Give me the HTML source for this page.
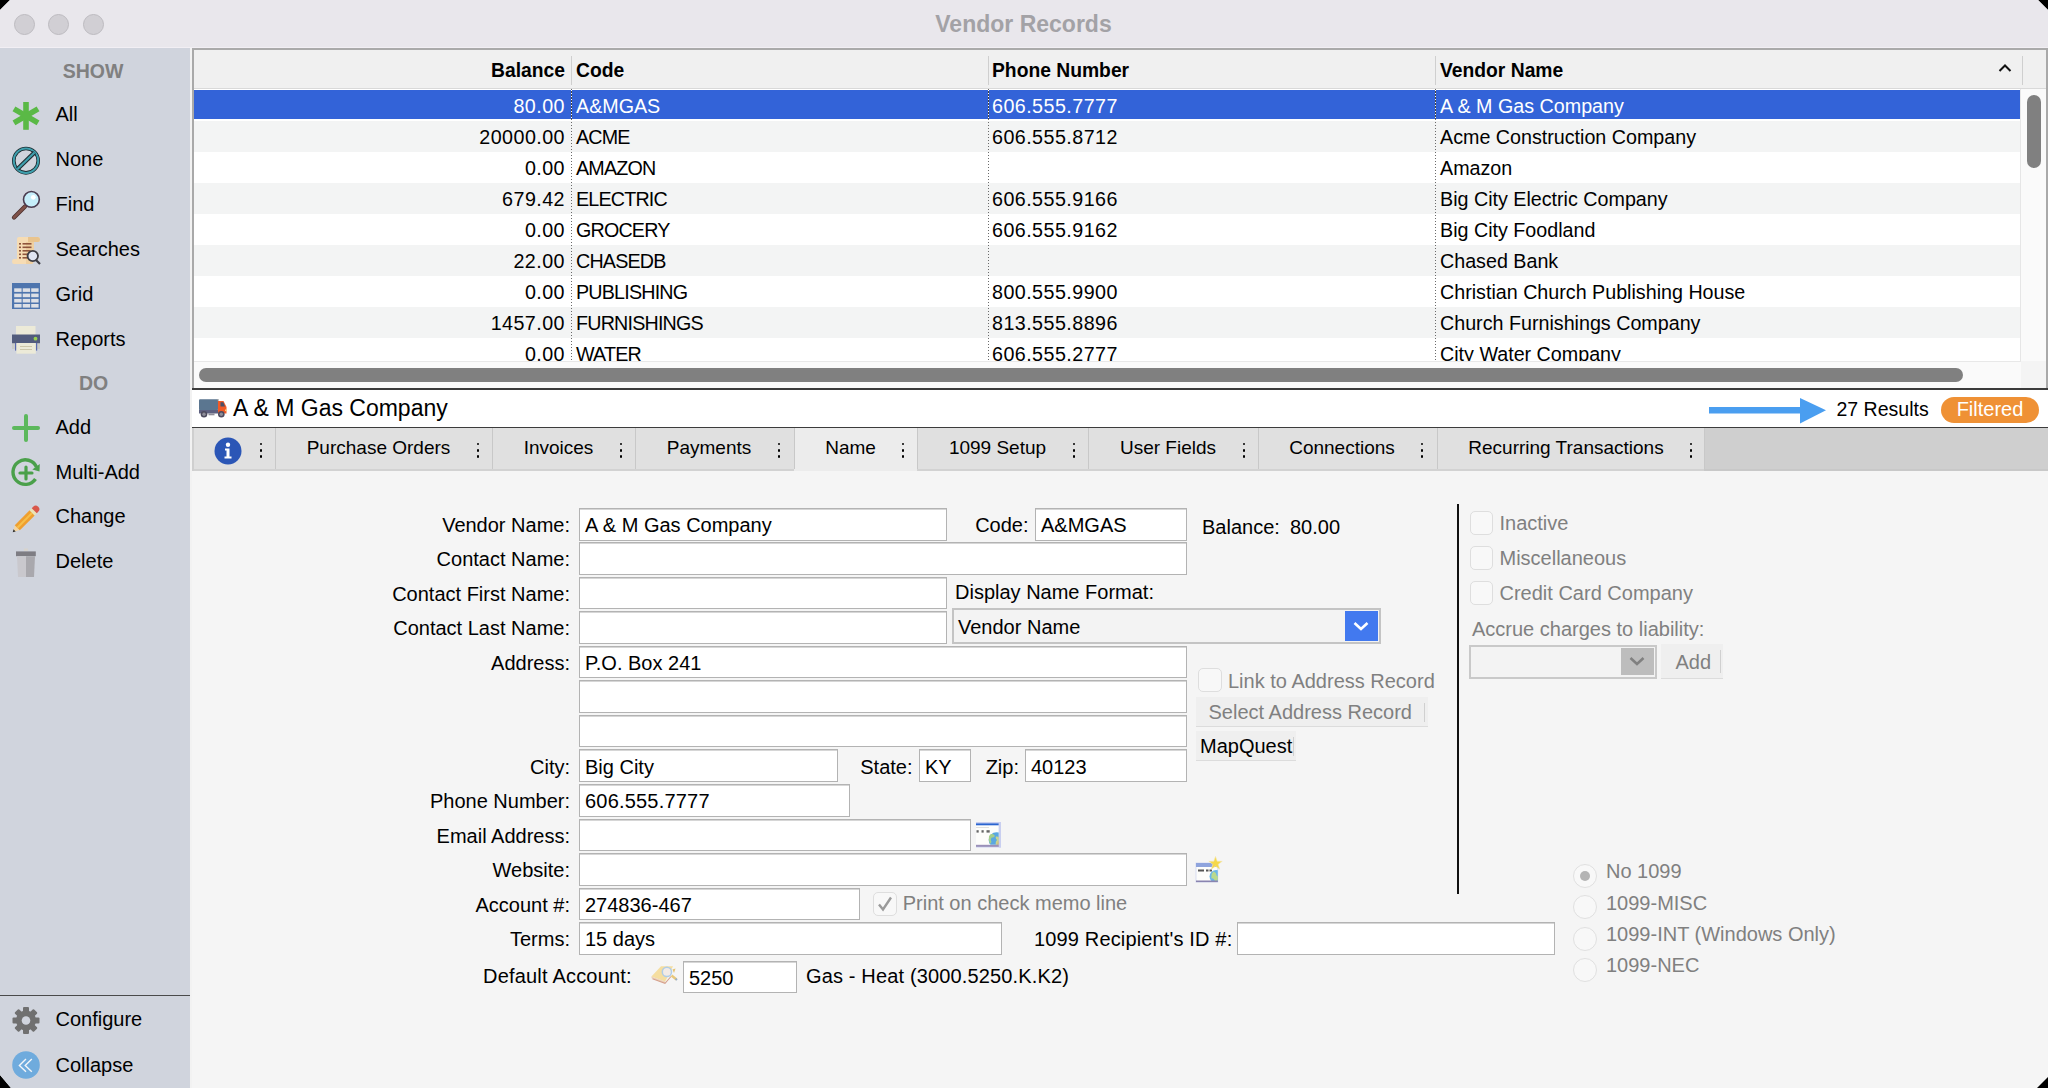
<!DOCTYPE html><html><head><meta charset="utf-8"><style>
html,body{margin:0;padding:0;width:2048px;height:1088px;overflow:hidden;background:#000;}
.t{position:absolute;white-space:nowrap;font-family:"Liberation Sans",sans-serif;}
.r{position:absolute;}
svg{position:absolute;}
#win{position:absolute;left:0;top:0;width:2048px;height:1088px;background:#f5f5f5;overflow:hidden;clip-path:polygon(10px 0,2038px 0,2048px 10px,2048px 1077px,2037px 1088px,11px 1088px,0 1075px,0 10px);}
</style></head><body><div id="win">
<div class="r" style="left:0px;top:0px;width:2048px;height:48px;background:#e9e7ec;"></div>
<div class="r" style="left:0px;top:46.5px;width:2048px;height:1.5px;background:#f2eff4;"></div>
<div class="r" style="left:14.0px;top:14px;width:21px;height:21px;border-radius:50%;background:#d1cfd4;box-sizing:border-box;border:1px solid #bdbbc0;"></div>
<div class="r" style="left:48.0px;top:14px;width:21px;height:21px;border-radius:50%;background:#d1cfd4;box-sizing:border-box;border:1px solid #bdbbc0;"></div>
<div class="r" style="left:82.5px;top:14px;width:21px;height:21px;border-radius:50%;background:#d1cfd4;box-sizing:border-box;border:1px solid #bdbbc0;"></div>
<div class="t" style="left:423.5px;width:1200px;text-align:center;top:12.63px;font-size:23px;line-height:23px;font-weight:700;color:#a3a2a6;">Vendor Records</div>
<div class="r" style="left:0px;top:48px;width:190px;height:1040px;background:#d0d4dd;"></div>
<div class="r" style="left:190px;top:48px;width:2px;height:1040px;background:#f2f2f2;"></div>
<div class="t" style="left:-507px;width:1200px;text-align:center;top:62.29px;font-size:19.5px;line-height:19.5px;font-weight:700;color:#808080;">SHOW</div>
<div class="t" style="left:-506.5px;width:1200px;text-align:center;top:374.29px;font-size:19.5px;line-height:19.5px;font-weight:700;color:#808080;">DO</div>
<div class="t" style="left:55.5px;top:104.07px;font-size:20px;line-height:20px;font-weight:400;color:#000;">All</div>
<div class="t" style="left:55.5px;top:149.07px;font-size:20px;line-height:20px;font-weight:400;color:#000;">None</div>
<div class="t" style="left:55.5px;top:194.07px;font-size:20px;line-height:20px;font-weight:400;color:#000;">Find</div>
<div class="t" style="left:55.5px;top:239.07px;font-size:20px;line-height:20px;font-weight:400;color:#000;">Searches</div>
<div class="t" style="left:55.5px;top:284.07px;font-size:20px;line-height:20px;font-weight:400;color:#000;">Grid</div>
<div class="t" style="left:55.5px;top:329.07px;font-size:20px;line-height:20px;font-weight:400;color:#000;">Reports</div>
<div class="t" style="left:55.5px;top:416.57px;font-size:20px;line-height:20px;font-weight:400;color:#000;">Add</div>
<div class="t" style="left:55.5px;top:461.57px;font-size:20px;line-height:20px;font-weight:400;color:#000;">Multi-Add</div>
<div class="t" style="left:55.5px;top:506.07px;font-size:20px;line-height:20px;font-weight:400;color:#000;">Change</div>
<div class="t" style="left:55.5px;top:551.07px;font-size:20px;line-height:20px;font-weight:400;color:#000;">Delete</div>
<div class="r" style="left:0px;top:995px;width:190px;height:1px;background:#4a4a4a;"></div>
<div class="t" style="left:55.5px;top:1009.07px;font-size:20px;line-height:20px;font-weight:400;color:#000;">Configure</div>
<div class="t" style="left:55.5px;top:1054.57px;font-size:20px;line-height:20px;font-weight:400;color:#000;">Collapse</div>
<div class="r" style="left:192px;top:48px;width:2px;height:342px;background:#a9a9a9;"></div>
<div class="r" style="left:192px;top:48px;width:1856px;height:2px;background:#aaaaaa;"></div>
<div class="r" style="left:194px;top:50px;width:1852px;height:339px;background:#fff;"></div>
<div class="r" style="left:194px;top:50px;width:1852px;height:38px;background:#f0f0f0;"></div>
<div class="r" style="left:194px;top:88px;width:1852px;height:1px;background:#d9d9d9;"></div>
<div class="r" style="left:571px;top:56px;width:1px;height:29px;background:#cfcfcf;"></div>
<div class="r" style="left:988px;top:56px;width:1px;height:29px;background:#cfcfcf;"></div>
<div class="r" style="left:1435px;top:56px;width:1px;height:29px;background:#cfcfcf;"></div>
<div class="r" style="left:2022px;top:56px;width:1px;height:29px;background:#cfcfcf;"></div>
<div class="t" style="left:-635px;width:1200px;text-align:right;top:61.36px;font-size:19.3px;line-height:19.3px;font-weight:700;color:#000;">Balance</div>
<div class="t" style="left:576px;top:61.36px;font-size:19.3px;line-height:19.3px;font-weight:700;color:#000;">Code</div>
<div class="t" style="left:992px;top:61.36px;font-size:19.3px;line-height:19.3px;font-weight:700;color:#000;">Phone Number</div>
<div class="t" style="left:1440px;top:61.36px;font-size:19.3px;line-height:19.3px;font-weight:700;color:#000;">Vendor Name</div>
<svg style="left:1995px;top:61px" width="20" height="14" viewBox="0 0 20 14"><path d="M4.5 10 L10 4.5 L15.5 10" fill="none" stroke="#111" stroke-width="2"/></svg>
<div class="r" style="left:194px;top:89px;width:1852px;height:272px;overflow:hidden;">
<div class="r" style="left:0;top:1px;width:1826px;height:29px;background:#3363d8;"></div>
<div class="t" style="left:-829px;width:1200px;text-align:right;top:7.52px;font-size:19.7px;line-height:19.7px;color:#fff;letter-spacing:0.45px;">80.00</div>
<div class="t" style="left:382px;top:7.52px;font-size:19.7px;line-height:19.7px;color:#fff;">A&amp;MGAS</div>
<div class="t" style="left:798px;top:7.52px;font-size:19.7px;line-height:19.7px;color:#fff;letter-spacing:0.45px;">606.555.7777</div>
<div class="t" style="left:1246px;top:7.52px;font-size:19.7px;line-height:19.7px;color:#fff;">A &amp; M Gas Company</div>
<div class="r" style="left:0;top:32px;width:1826px;height:31px;background:#f3f4f4;"></div>
<div class="t" style="left:-829px;width:1200px;text-align:right;top:38.52px;font-size:19.7px;line-height:19.7px;color:#000;letter-spacing:0.45px;">20000.00</div>
<div class="t" style="left:382px;top:38.52px;font-size:19.7px;line-height:19.7px;color:#000;letter-spacing:-0.8px;">ACME</div>
<div class="t" style="left:798px;top:38.52px;font-size:19.7px;line-height:19.7px;color:#000;letter-spacing:0.45px;">606.555.8712</div>
<div class="t" style="left:1246px;top:38.52px;font-size:19.7px;line-height:19.7px;color:#000;">Acme Construction Company</div>
<div class="r" style="left:0;top:63px;width:1826px;height:31px;background:#ffffff;"></div>
<div class="t" style="left:-829px;width:1200px;text-align:right;top:69.52px;font-size:19.7px;line-height:19.7px;color:#000;letter-spacing:0.45px;">0.00</div>
<div class="t" style="left:382px;top:69.52px;font-size:19.7px;line-height:19.7px;color:#000;letter-spacing:-0.8px;">AMAZON</div>
<div class="t" style="left:798px;top:69.52px;font-size:19.7px;line-height:19.7px;color:#000;"></div>
<div class="t" style="left:1246px;top:69.52px;font-size:19.7px;line-height:19.7px;color:#000;">Amazon</div>
<div class="r" style="left:0;top:94px;width:1826px;height:31px;background:#f3f4f4;"></div>
<div class="t" style="left:-829px;width:1200px;text-align:right;top:100.52px;font-size:19.7px;line-height:19.7px;color:#000;letter-spacing:0.45px;">679.42</div>
<div class="t" style="left:382px;top:100.52px;font-size:19.7px;line-height:19.7px;color:#000;letter-spacing:-0.8px;">ELECTRIC</div>
<div class="t" style="left:798px;top:100.52px;font-size:19.7px;line-height:19.7px;color:#000;letter-spacing:0.45px;">606.555.9166</div>
<div class="t" style="left:1246px;top:100.52px;font-size:19.7px;line-height:19.7px;color:#000;">Big City Electric Company</div>
<div class="r" style="left:0;top:125px;width:1826px;height:31px;background:#ffffff;"></div>
<div class="t" style="left:-829px;width:1200px;text-align:right;top:131.52px;font-size:19.7px;line-height:19.7px;color:#000;letter-spacing:0.45px;">0.00</div>
<div class="t" style="left:382px;top:131.52px;font-size:19.7px;line-height:19.7px;color:#000;letter-spacing:-0.8px;">GROCERY</div>
<div class="t" style="left:798px;top:131.52px;font-size:19.7px;line-height:19.7px;color:#000;letter-spacing:0.45px;">606.555.9162</div>
<div class="t" style="left:1246px;top:131.52px;font-size:19.7px;line-height:19.7px;color:#000;">Big City Foodland</div>
<div class="r" style="left:0;top:156px;width:1826px;height:31px;background:#f3f4f4;"></div>
<div class="t" style="left:-829px;width:1200px;text-align:right;top:162.52px;font-size:19.7px;line-height:19.7px;color:#000;letter-spacing:0.45px;">22.00</div>
<div class="t" style="left:382px;top:162.52px;font-size:19.7px;line-height:19.7px;color:#000;letter-spacing:-0.8px;">CHASEDB</div>
<div class="t" style="left:798px;top:162.52px;font-size:19.7px;line-height:19.7px;color:#000;"></div>
<div class="t" style="left:1246px;top:162.52px;font-size:19.7px;line-height:19.7px;color:#000;">Chased Bank</div>
<div class="r" style="left:0;top:187px;width:1826px;height:31px;background:#ffffff;"></div>
<div class="t" style="left:-829px;width:1200px;text-align:right;top:193.52px;font-size:19.7px;line-height:19.7px;color:#000;letter-spacing:0.45px;">0.00</div>
<div class="t" style="left:382px;top:193.52px;font-size:19.7px;line-height:19.7px;color:#000;letter-spacing:-0.8px;">PUBLISHING</div>
<div class="t" style="left:798px;top:193.52px;font-size:19.7px;line-height:19.7px;color:#000;letter-spacing:0.45px;">800.555.9900</div>
<div class="t" style="left:1246px;top:193.52px;font-size:19.7px;line-height:19.7px;color:#000;">Christian Church Publishing House</div>
<div class="r" style="left:0;top:218px;width:1826px;height:31px;background:#f3f4f4;"></div>
<div class="t" style="left:-829px;width:1200px;text-align:right;top:224.52px;font-size:19.7px;line-height:19.7px;color:#000;letter-spacing:0.45px;">1457.00</div>
<div class="t" style="left:382px;top:224.52px;font-size:19.7px;line-height:19.7px;color:#000;letter-spacing:-0.8px;">FURNISHINGS</div>
<div class="t" style="left:798px;top:224.52px;font-size:19.7px;line-height:19.7px;color:#000;letter-spacing:0.45px;">813.555.8896</div>
<div class="t" style="left:1246px;top:224.52px;font-size:19.7px;line-height:19.7px;color:#000;">Church Furnishings Company</div>
<div class="r" style="left:0;top:249px;width:1826px;height:31px;background:#ffffff;"></div>
<div class="t" style="left:-829px;width:1200px;text-align:right;top:255.52px;font-size:19.7px;line-height:19.7px;color:#000;letter-spacing:0.45px;">0.00</div>
<div class="t" style="left:382px;top:255.52px;font-size:19.7px;line-height:19.7px;color:#000;letter-spacing:-0.8px;">WATER</div>
<div class="t" style="left:798px;top:255.52px;font-size:19.7px;line-height:19.7px;color:#000;letter-spacing:0.45px;">606.555.2777</div>
<div class="t" style="left:1246px;top:255.52px;font-size:19.7px;line-height:19.7px;color:#000;">City Water Company</div>
<div class="r" style="left:377px;top:0;width:1px;height:272px;background:repeating-linear-gradient(to bottom,#6a6a6a 0 1.5px,transparent 1.5px 3px);"></div>
<div class="r" style="left:377px;top:1px;width:1px;height:29px;background:repeating-linear-gradient(to bottom,#ffffff 0 1.5px,#444 1.5px 3px);"></div>
<div class="r" style="left:794px;top:0;width:1px;height:272px;background:repeating-linear-gradient(to bottom,#6a6a6a 0 1.5px,transparent 1.5px 3px);"></div>
<div class="r" style="left:794px;top:1px;width:1px;height:29px;background:repeating-linear-gradient(to bottom,#ffffff 0 1.5px,#444 1.5px 3px);"></div>
<div class="r" style="left:1241px;top:0;width:1px;height:272px;background:repeating-linear-gradient(to bottom,#6a6a6a 0 1.5px,transparent 1.5px 3px);"></div>
<div class="r" style="left:1241px;top:1px;width:1px;height:29px;background:repeating-linear-gradient(to bottom,#ffffff 0 1.5px,#444 1.5px 3px);"></div>
</div>
<div class="r" style="left:2020px;top:89px;width:26px;height:272px;background:#fafafa;border-left:1px solid #e6e6e6;box-sizing:border-box;"></div>
<div class="r" style="left:2027px;top:95px;width:14px;height:73px;background:#808080;border-radius:7px;"></div>
<div class="r" style="left:194px;top:361px;width:1852px;height:28px;background:#fafafa;border-top:1px solid #e8e8e8;box-sizing:border-box;"></div>
<div class="r" style="left:2021px;top:361px;width:25px;height:28px;background:#f4f4f4;"></div>
<div class="r" style="left:199px;top:368px;width:1764px;height:14px;background:#808080;border-radius:7px;"></div>
<div class="r" style="left:2046px;top:48px;width:2px;height:342px;background:#a9a9a9;"></div>
<div class="r" style="left:192px;top:388px;width:1856px;height:2px;background:#3c3c3c;"></div>
<div class="r" style="left:192px;top:390px;width:1856px;height:37px;background:#fff;"></div>
<div class="r" style="left:192px;top:427px;width:1856px;height:1px;background:#3c3c3c;"></div>
<div class="t" style="left:233px;top:396.73px;font-size:23px;line-height:23px;font-weight:400;color:#000;">A &amp; M Gas Company</div>
<svg style="left:1708px;top:397px" width="120" height="28" viewBox="0 0 120 28"><rect x="1" y="10" width="93" height="6.5" fill="#4a9ef0"/><path d="M92 1 L118 13.3 L92 26.5 Z" fill="#4a9ef0"/></svg>
<div class="t" style="left:1836.5px;top:399.69px;font-size:19.5px;line-height:19.5px;font-weight:400;color:#000;">27 Results</div>
<div class="r" style="left:1941px;top:397px;width:98px;height:26px;background:#ef9135;border-radius:13px;"></div>
<div class="t" style="left:1390px;width:1200px;text-align:center;top:399.27px;font-size:20px;line-height:20px;font-weight:400;color:#fff;">Filtered</div>
<div class="r" style="left:192px;top:428px;width:1856px;height:43px;background:#cfcfcf;"></div>
<div class="r" style="left:1704px;top:469px;width:344px;height:1.5px;background:#c8c8c8;"></div>
<div class="r" style="left:194px;top:428px;width:81px;height:43px;background:#e0e0e0;"></div>
<div class="r" style="left:194px;top:469px;width:81px;height:1.5px;background:#d2d2d2;"></div>
<div class="r" style="left:259.7px;top:442.7px;width:2.6000000000000227px;height:2.6000000000000227px;background:#000;border-radius:50%;"></div>
<div class="r" style="left:259.7px;top:448.95px;width:2.6000000000000227px;height:2.6000000000000227px;background:#000;border-radius:50%;"></div>
<div class="r" style="left:259.7px;top:455.2px;width:2.6000000000000227px;height:2.6000000000000227px;background:#000;border-radius:50%;"></div>
<div class="r" style="left:275px;top:428px;width:217px;height:43px;background:#e0e0e0;"></div>
<div class="r" style="left:275px;top:469px;width:217px;height:1.5px;background:#d2d2d2;"></div>
<div class="r" style="left:275px;top:428px;width:1px;height:41px;background:#c8c8c8;"></div>
<div class="t" style="left:-221.5px;width:1200px;text-align:center;top:438.12px;font-size:19px;line-height:19px;font-weight:400;color:#000;">Purchase Orders</div>
<div class="r" style="left:476.7px;top:442.7px;width:2.6000000000000227px;height:2.6000000000000227px;background:#000;border-radius:50%;"></div>
<div class="r" style="left:476.7px;top:448.95px;width:2.6000000000000227px;height:2.6000000000000227px;background:#000;border-radius:50%;"></div>
<div class="r" style="left:476.7px;top:455.2px;width:2.6000000000000227px;height:2.6000000000000227px;background:#000;border-radius:50%;"></div>
<div class="r" style="left:492px;top:428px;width:143px;height:43px;background:#e0e0e0;"></div>
<div class="r" style="left:492px;top:469px;width:143px;height:1.5px;background:#d2d2d2;"></div>
<div class="r" style="left:492px;top:428px;width:1px;height:41px;background:#c8c8c8;"></div>
<div class="t" style="left:-41.5px;width:1200px;text-align:center;top:438.12px;font-size:19px;line-height:19px;font-weight:400;color:#000;">Invoices</div>
<div class="r" style="left:619.7px;top:442.7px;width:2.599999999999909px;height:2.6000000000000227px;background:#000;border-radius:50%;"></div>
<div class="r" style="left:619.7px;top:448.95px;width:2.599999999999909px;height:2.6000000000000227px;background:#000;border-radius:50%;"></div>
<div class="r" style="left:619.7px;top:455.2px;width:2.599999999999909px;height:2.6000000000000227px;background:#000;border-radius:50%;"></div>
<div class="r" style="left:635px;top:428px;width:159px;height:43px;background:#e0e0e0;"></div>
<div class="r" style="left:635px;top:469px;width:159px;height:1.5px;background:#d2d2d2;"></div>
<div class="r" style="left:635px;top:428px;width:1px;height:41px;background:#c8c8c8;"></div>
<div class="t" style="left:109.0px;width:1200px;text-align:center;top:438.12px;font-size:19px;line-height:19px;font-weight:400;color:#000;">Payments</div>
<div class="r" style="left:777.7px;top:442.7px;width:2.599999999999909px;height:2.6000000000000227px;background:#000;border-radius:50%;"></div>
<div class="r" style="left:777.7px;top:448.95px;width:2.599999999999909px;height:2.6000000000000227px;background:#000;border-radius:50%;"></div>
<div class="r" style="left:777.7px;top:455.2px;width:2.599999999999909px;height:2.6000000000000227px;background:#000;border-radius:50%;"></div>
<div class="r" style="left:794px;top:428px;width:123px;height:43px;background:#ececec;"></div>
<div class="r" style="left:794px;top:428px;width:1px;height:41px;background:#c8c8c8;"></div>
<div class="t" style="left:250.5px;width:1200px;text-align:center;top:438.12px;font-size:19px;line-height:19px;font-weight:400;color:#000;">Name</div>
<div class="r" style="left:901.7px;top:442.7px;width:2.599999999999909px;height:2.6000000000000227px;background:#000;border-radius:50%;"></div>
<div class="r" style="left:901.7px;top:448.95px;width:2.599999999999909px;height:2.6000000000000227px;background:#000;border-radius:50%;"></div>
<div class="r" style="left:901.7px;top:455.2px;width:2.599999999999909px;height:2.6000000000000227px;background:#000;border-radius:50%;"></div>
<div class="r" style="left:917px;top:428px;width:171px;height:43px;background:#e0e0e0;"></div>
<div class="r" style="left:917px;top:469px;width:171px;height:1.5px;background:#d2d2d2;"></div>
<div class="r" style="left:917px;top:428px;width:1px;height:41px;background:#c8c8c8;"></div>
<div class="t" style="left:397.5px;width:1200px;text-align:center;top:438.12px;font-size:19px;line-height:19px;font-weight:400;color:#000;">1099 Setup</div>
<div class="r" style="left:1072.7px;top:442.7px;width:2.599999999999909px;height:2.6000000000000227px;background:#000;border-radius:50%;"></div>
<div class="r" style="left:1072.7px;top:448.95px;width:2.599999999999909px;height:2.6000000000000227px;background:#000;border-radius:50%;"></div>
<div class="r" style="left:1072.7px;top:455.2px;width:2.599999999999909px;height:2.6000000000000227px;background:#000;border-radius:50%;"></div>
<div class="r" style="left:1088px;top:428px;width:170px;height:43px;background:#e0e0e0;"></div>
<div class="r" style="left:1088px;top:469px;width:170px;height:1.5px;background:#d2d2d2;"></div>
<div class="r" style="left:1088px;top:428px;width:1px;height:41px;background:#c8c8c8;"></div>
<div class="t" style="left:568.0px;width:1200px;text-align:center;top:438.12px;font-size:19px;line-height:19px;font-weight:400;color:#000;">User Fields</div>
<div class="r" style="left:1242.7px;top:442.7px;width:2.599999999999909px;height:2.6000000000000227px;background:#000;border-radius:50%;"></div>
<div class="r" style="left:1242.7px;top:448.95px;width:2.599999999999909px;height:2.6000000000000227px;background:#000;border-radius:50%;"></div>
<div class="r" style="left:1242.7px;top:455.2px;width:2.599999999999909px;height:2.6000000000000227px;background:#000;border-radius:50%;"></div>
<div class="r" style="left:1258px;top:428px;width:179px;height:43px;background:#e0e0e0;"></div>
<div class="r" style="left:1258px;top:469px;width:179px;height:1.5px;background:#d2d2d2;"></div>
<div class="r" style="left:1258px;top:428px;width:1px;height:41px;background:#c8c8c8;"></div>
<div class="t" style="left:742.0px;width:1200px;text-align:center;top:438.12px;font-size:19px;line-height:19px;font-weight:400;color:#000;">Connections</div>
<div class="r" style="left:1420.7px;top:442.7px;width:2.599999999999909px;height:2.6000000000000227px;background:#000;border-radius:50%;"></div>
<div class="r" style="left:1420.7px;top:448.95px;width:2.599999999999909px;height:2.6000000000000227px;background:#000;border-radius:50%;"></div>
<div class="r" style="left:1420.7px;top:455.2px;width:2.599999999999909px;height:2.6000000000000227px;background:#000;border-radius:50%;"></div>
<div class="r" style="left:1437px;top:428px;width:267px;height:43px;background:#e0e0e0;"></div>
<div class="r" style="left:1437px;top:469px;width:267px;height:1.5px;background:#d2d2d2;"></div>
<div class="r" style="left:1437px;top:428px;width:1px;height:41px;background:#c8c8c8;"></div>
<div class="t" style="left:966.0px;width:1200px;text-align:center;top:438.12px;font-size:19px;line-height:19px;font-weight:400;color:#000;">Recurring Transactions</div>
<div class="r" style="left:1689.7px;top:442.7px;width:2.599999999999909px;height:2.6000000000000227px;background:#000;border-radius:50%;"></div>
<div class="r" style="left:1689.7px;top:448.95px;width:2.599999999999909px;height:2.6000000000000227px;background:#000;border-radius:50%;"></div>
<div class="r" style="left:1689.7px;top:455.2px;width:2.599999999999909px;height:2.6000000000000227px;background:#000;border-radius:50%;"></div>
<div class="r" style="left:1704px;top:428px;width:1px;height:41px;background:#c8c8c8;"></div>
<svg style="left:214px;top:437px" width="28" height="28" viewBox="0 0 28 28"><circle cx="14" cy="14" r="13.5" fill="#2b56b6"/><circle cx="14" cy="7.8" r="2.2" fill="#fff"/><path d="M11 11.5 H15.5 V19.5 H17.5 V21.5 H10.5 V19.5 H12.5 V13.5 H11 Z" fill="#fff"/></svg>
<div class="t" style="left:-630px;width:1200px;text-align:right;top:514.87px;font-size:20px;line-height:20px;font-weight:400;color:#000;">Vendor Name:</div>
<div class="t" style="left:-630px;width:1200px;text-align:right;top:549.37px;font-size:20px;line-height:20px;font-weight:400;color:#000;">Contact Name:</div>
<div class="t" style="left:-630px;width:1200px;text-align:right;top:583.87px;font-size:20px;line-height:20px;font-weight:400;color:#000;">Contact First Name:</div>
<div class="t" style="left:-630px;width:1200px;text-align:right;top:618.37px;font-size:20px;line-height:20px;font-weight:400;color:#000;">Contact Last Name:</div>
<div class="t" style="left:-630px;width:1200px;text-align:right;top:652.87px;font-size:20px;line-height:20px;font-weight:400;color:#000;">Address:</div>
<div class="t" style="left:-630px;width:1200px;text-align:right;top:756.57px;font-size:20px;line-height:20px;font-weight:400;color:#000;">City:</div>
<div class="t" style="left:-630px;width:1200px;text-align:right;top:791.07px;font-size:20px;line-height:20px;font-weight:400;color:#000;">Phone Number:</div>
<div class="t" style="left:-630px;width:1200px;text-align:right;top:825.57px;font-size:20px;line-height:20px;font-weight:400;color:#000;">Email Address:</div>
<div class="t" style="left:-630px;width:1200px;text-align:right;top:860.07px;font-size:20px;line-height:20px;font-weight:400;color:#000;">Website:</div>
<div class="t" style="left:-630px;width:1200px;text-align:right;top:894.57px;font-size:20px;line-height:20px;font-weight:400;color:#000;">Account #:</div>
<div class="t" style="left:-630px;width:1200px;text-align:right;top:929.07px;font-size:20px;line-height:20px;font-weight:400;color:#000;">Terms:</div>
<div class="r" style="left:579px;top:508px;width:368px;height:33px;background:#fff;border:1px solid #b3b3b3;box-shadow:inset 0 1px 0 #d6d6d6;box-sizing:border-box;"></div>
<div class="t" style="left:585px;top:515.07px;font-size:20px;line-height:20px;font-weight:400;color:#000;">A &amp; M Gas Company</div>
<div class="t" style="left:-171.5px;width:1200px;text-align:right;top:515.07px;font-size:20px;line-height:20px;font-weight:400;color:#000;">Code:</div>
<div class="r" style="left:1035px;top:508px;width:152px;height:33px;background:#fff;border:1px solid #b3b3b3;box-shadow:inset 0 1px 0 #d6d6d6;box-sizing:border-box;"></div>
<div class="t" style="left:1041px;top:515.07px;font-size:20px;line-height:20px;font-weight:400;color:#000;">A&amp;MGAS</div>
<div class="t" style="left:1202px;top:517.07px;font-size:20px;line-height:20px;font-weight:400;color:#000;">Balance:</div>
<div class="t" style="left:1290px;top:517.07px;font-size:20px;line-height:20px;font-weight:400;color:#000;">80.00</div>
<div class="r" style="left:579px;top:542px;width:608px;height:33px;background:#fff;border:1px solid #b3b3b3;box-shadow:inset 0 1px 0 #d6d6d6;box-sizing:border-box;"></div>
<div class="r" style="left:579px;top:577px;width:368px;height:32px;background:#fff;border:1px solid #b3b3b3;box-shadow:inset 0 1px 0 #d6d6d6;box-sizing:border-box;"></div>
<div class="t" style="left:955px;top:582.07px;font-size:20px;line-height:20px;font-weight:400;color:#000;">Display Name Format:</div>
<div class="r" style="left:579px;top:611px;width:368px;height:33px;background:#fff;border:1px solid #b3b3b3;box-shadow:inset 0 1px 0 #d6d6d6;box-sizing:border-box;"></div>
<div class="r" style="left:952px;top:608px;width:429px;height:36px;background:#f3f3f3;border:2px solid #c4c4c4;box-sizing:border-box;"></div>
<div class="r" style="left:1345px;top:611px;width:33px;height:30px;background:#4279ef;"></div>
<svg style="left:1350px;top:617px" width="22" height="18" viewBox="0 0 22 18"><path d="M4.5 6 L11 12 L17.5 6" fill="none" stroke="#fff" stroke-width="2.6"/></svg>
<div class="t" style="left:958px;top:617.07px;font-size:20px;line-height:20px;font-weight:400;color:#000;">Vendor Name</div>
<div class="r" style="left:579px;top:646px;width:608px;height:32px;background:#fff;border:1px solid #b3b3b3;box-shadow:inset 0 1px 0 #d6d6d6;box-sizing:border-box;"></div>
<div class="t" style="left:585px;top:653.07px;font-size:20px;line-height:20px;font-weight:400;color:#000;">P.O. Box 241</div>
<div class="r" style="left:579px;top:680px;width:608px;height:33px;background:#fff;border:1px solid #b3b3b3;box-shadow:inset 0 1px 0 #d6d6d6;box-sizing:border-box;"></div>
<div class="r" style="left:579px;top:715px;width:608px;height:32px;background:#fff;border:1px solid #b3b3b3;box-shadow:inset 0 1px 0 #d6d6d6;box-sizing:border-box;"></div>
<div class="r" style="left:1198px;top:668px;width:24px;height:24px;background:#f8f8f8;border:1px solid #dedede;border-radius:5px;box-sizing:border-box;"></div>
<div class="t" style="left:1228px;top:670.67px;font-size:20px;line-height:20px;font-weight:400;color:#808080;">Link to Address Record</div>
<div class="r" style="left:1196px;top:697px;width:232px;height:30px;background:#efefef;border-bottom:1px solid #dcdcdc;box-sizing:border-box;"></div>
<div class="r" style="left:1424px;top:703px;width:1px;height:19px;background:#d0d0d0;"></div>
<div class="t" style="left:1208.5px;top:702.07px;font-size:20px;line-height:20px;font-weight:400;color:#808080;">Select Address Record</div>
<div class="r" style="left:1196px;top:731px;width:100px;height:30px;background:#efefef;border-bottom:1px solid #dcdcdc;box-sizing:border-box;"></div>
<div class="r" style="left:1293px;top:737px;width:1px;height:19px;background:#d0d0d0;"></div>
<div class="t" style="left:1200px;top:736.07px;font-size:20px;line-height:20px;font-weight:400;color:#000;">MapQuest</div>
<div class="r" style="left:579px;top:749px;width:259px;height:33px;background:#fff;border:1px solid #b3b3b3;box-shadow:inset 0 1px 0 #d6d6d6;box-sizing:border-box;"></div>
<div class="t" style="left:585px;top:756.57px;font-size:20px;line-height:20px;font-weight:400;color:#000;">Big City</div>
<div class="t" style="left:-287.5px;width:1200px;text-align:right;top:756.57px;font-size:20px;line-height:20px;font-weight:400;color:#000;">State:</div>
<div class="r" style="left:919px;top:749px;width:52px;height:33px;background:#fff;border:1px solid #b3b3b3;box-shadow:inset 0 1px 0 #d6d6d6;box-sizing:border-box;"></div>
<div class="t" style="left:925px;top:756.57px;font-size:20px;line-height:20px;font-weight:400;color:#000;">KY</div>
<div class="t" style="left:-181px;width:1200px;text-align:right;top:756.57px;font-size:20px;line-height:20px;font-weight:400;color:#000;">Zip:</div>
<div class="r" style="left:1025px;top:749px;width:162px;height:33px;background:#fff;border:1px solid #b3b3b3;box-shadow:inset 0 1px 0 #d6d6d6;box-sizing:border-box;"></div>
<div class="t" style="left:1031px;top:756.57px;font-size:20px;line-height:20px;font-weight:400;color:#000;">40123</div>
<div class="r" style="left:579px;top:784px;width:271px;height:33px;background:#fff;border:1px solid #b3b3b3;box-shadow:inset 0 1px 0 #d6d6d6;box-sizing:border-box;"></div>
<div class="t" style="left:585px;top:791.07px;font-size:20px;line-height:20px;font-weight:400;color:#000;"><span style="letter-spacing:0.2px">606.555.7777</span></div>
<div class="r" style="left:579px;top:819px;width:392px;height:32px;background:#fff;border:1px solid #b3b3b3;box-shadow:inset 0 1px 0 #d6d6d6;box-sizing:border-box;"></div>
<div class="r" style="left:579px;top:853px;width:608px;height:33px;background:#fff;border:1px solid #b3b3b3;box-shadow:inset 0 1px 0 #d6d6d6;box-sizing:border-box;"></div>
<div class="r" style="left:579px;top:888px;width:281px;height:32px;background:#fff;border:1px solid #b3b3b3;box-shadow:inset 0 1px 0 #d6d6d6;box-sizing:border-box;"></div>
<div class="t" style="left:585px;top:895.07px;font-size:20px;line-height:20px;font-weight:400;color:#000;">274836-467</div>
<div class="r" style="left:873px;top:892px;width:24px;height:24px;background:#f8f8f8;border:1px solid #dedede;border-radius:5px;box-sizing:border-box;"></div>
<svg style="left:873px;top:892px" width="24" height="24" viewBox="0 0 24 24"><path d="M6 12.5 L10 17.5 L18 5.5" fill="none" stroke="#9a9a9a" stroke-width="2.4"/></svg>
<div class="t" style="left:902.7px;top:893.07px;font-size:20px;line-height:20px;font-weight:400;color:#808080;">Print on check memo line</div>
<div class="r" style="left:579px;top:922px;width:423px;height:33px;background:#fff;border:1px solid #b3b3b3;box-shadow:inset 0 1px 0 #d6d6d6;box-sizing:border-box;"></div>
<div class="t" style="left:585px;top:929.07px;font-size:20px;line-height:20px;font-weight:400;color:#000;">15 days</div>
<div class="t" style="left:1034px;top:929.07px;font-size:20px;line-height:20px;font-weight:400;color:#000;letter-spacing:0.15px;">1099 Recipient's ID #:</div>
<div class="r" style="left:1237px;top:922px;width:318px;height:33px;background:#fff;border:1px solid #b3b3b3;box-shadow:inset 0 1px 0 #d6d6d6;box-sizing:border-box;"></div>
<div class="t" style="left:483px;top:966.37px;font-size:20px;line-height:20px;font-weight:400;color:#000;letter-spacing:0.2px;">Default Account:</div>
<div class="r" style="left:683px;top:961px;width:114px;height:32px;background:#fff;border:1px solid #b3b3b3;box-shadow:inset 0 1px 0 #d6d6d6;box-sizing:border-box;"></div>
<div class="t" style="left:689px;top:968.07px;font-size:20px;line-height:20px;font-weight:400;color:#000;">5250</div>
<div class="t" style="left:806px;top:966.37px;font-size:20px;line-height:20px;font-weight:400;color:#000;letter-spacing:0.15px;">Gas - Heat (3000.5250.K.K2)</div>
<div class="r" style="left:1457px;top:504px;width:2px;height:390px;background:#111;"></div>
<div class="r" style="left:1470px;top:511.29999999999995px;width:23px;height:24.0px;background:#f8f8f8;border:1px solid #dedede;border-radius:5px;box-sizing:border-box;"></div>
<div class="t" style="left:1499.5px;top:513.37px;font-size:20px;line-height:20px;font-weight:400;color:#808080;">Inactive</div>
<div class="r" style="left:1470px;top:546px;width:23px;height:24px;background:#f8f8f8;border:1px solid #dedede;border-radius:5px;box-sizing:border-box;"></div>
<div class="t" style="left:1499.5px;top:548.07px;font-size:20px;line-height:20px;font-weight:400;color:#808080;">Miscellaneous</div>
<div class="r" style="left:1470px;top:580.5px;width:23px;height:24.0px;background:#f8f8f8;border:1px solid #dedede;border-radius:5px;box-sizing:border-box;"></div>
<div class="t" style="left:1499.5px;top:582.57px;font-size:20px;line-height:20px;font-weight:400;color:#808080;">Credit Card Company</div>
<div class="t" style="left:1472px;top:618.57px;font-size:20px;line-height:20px;font-weight:400;color:#808080;">Accrue charges to liability:</div>
<div class="r" style="left:1469px;top:645px;width:188px;height:34px;background:#f3f3f3;border:2px solid #c9c9c9;box-sizing:border-box;"></div>
<div class="r" style="left:1621px;top:648px;width:33px;height:27px;background:#bdbdbd;"></div>
<svg style="left:1626px;top:652px" width="22" height="18" viewBox="0 0 22 18"><path d="M4.5 6 L11 12 L17.5 6" fill="none" stroke="#808080" stroke-width="2.6"/></svg>
<div class="r" style="left:1661px;top:644px;width:62px;height:35px;background:#efefef;border-bottom:1px solid #dcdcdc;box-sizing:border-box;"></div>
<div class="r" style="left:1720px;top:650px;width:1px;height:23px;background:#d0d0d0;"></div>
<div class="t" style="left:1675.5px;top:652.07px;font-size:20px;line-height:20px;font-weight:400;color:#808080;">Add</div>
<div class="r" style="left:1573px;top:864px;width:24px;height:24px;background:#f8f8f8;border:1px solid #e0e0e0;border-radius:50%;box-sizing:border-box;"></div>
<div class="t" style="left:1606px;top:861.47px;font-size:20px;line-height:20px;font-weight:400;color:#808080;">No 1099</div>
<div class="r" style="left:1573px;top:895.3px;width:24px;height:24.0px;background:#f8f8f8;border:1px solid #e0e0e0;border-radius:50%;box-sizing:border-box;"></div>
<div class="t" style="left:1606px;top:892.97px;font-size:20px;line-height:20px;font-weight:400;color:#808080;">1099-MISC</div>
<div class="r" style="left:1573px;top:926.5px;width:24px;height:24.0px;background:#f8f8f8;border:1px solid #e0e0e0;border-radius:50%;box-sizing:border-box;"></div>
<div class="t" style="left:1606px;top:923.77px;font-size:20px;line-height:20px;font-weight:400;color:#808080;">1099-INT (Windows Only)</div>
<div class="r" style="left:1573px;top:957.6px;width:24px;height:24.0px;background:#f8f8f8;border:1px solid #e0e0e0;border-radius:50%;box-sizing:border-box;"></div>
<div class="t" style="left:1606px;top:954.97px;font-size:20px;line-height:20px;font-weight:400;color:#808080;">1099-NEC</div>
<div class="r" style="left:1580px;top:871px;width:10px;height:10px;background:#b4b4b4;border-radius:50%;"></div>
<svg style="left:12px;top:102px" width="28" height="28" viewBox="0 0 28 28"><g fill="#5ab946" transform="translate(14 13.9)"><rect x="-2.8" y="-13.9" width="5.6" height="27.8"/><rect x="-2.8" y="-13.9" width="5.6" height="27.8" transform="rotate(60)"/><rect x="-2.8" y="-13.9" width="5.6" height="27.8" transform="rotate(-60)"/></g></svg>
<svg style="left:11px;top:146px" width="30" height="30" viewBox="0 0 30 30"><circle cx="15" cy="14.7" r="12.2" fill="none" stroke="#1d2b30" stroke-width="3.6"/><circle cx="15" cy="14.7" r="12.2" fill="none" stroke="#3f9fad" stroke-width="2"/><line x1="23.5" y1="6.5" x2="6.5" y2="23" stroke="#1d2b30" stroke-width="4.4"/><line x1="23.5" y1="6.5" x2="6.5" y2="23" stroke="#3f9fad" stroke-width="2.2"/></svg>
<svg style="left:11px;top:189px" width="32" height="32" viewBox="0 0 32 32"><line x1="3" y1="28.5" x2="14" y2="17.5" stroke="#4a2f2c" stroke-width="4.2" stroke-linecap="round"/><line x1="3" y1="28.5" x2="14" y2="17.5" stroke="#80524a" stroke-width="2.6" stroke-linecap="round"/><circle cx="20.4" cy="10.4" r="7.9" fill="#c6eefa" stroke="#4a3b4f" stroke-width="1.6"/><circle cx="22.3" cy="8.3" r="2.4" fill="#fff"/></svg>
<svg style="left:12px;top:236px" width="29" height="30" viewBox="0 0 29 30"><path d="M5 3 Q5 1 7 1 H26 Q28 1 28 3.5 Q28 6 26 6 H22 V22 Q22 28 19 28 H2 Q0 28 0 25.5 Q0 23 2 23 H5 Z" fill="#f6dcb4"/><path d="M16 1 H26 Q28 1 28 3.5 Q28 6 26 6 H16 Z" fill="#e9c48e"/><path d="M14 6 H22 V22 Q22 28 19 28 H14 Z" fill="#efcfa0"/><g fill="#8f553c"><rect x="7" y="7" width="2" height="1.6"/><rect x="10.5" y="7" width="9" height="1.6"/><rect x="7" y="10.5" width="2" height="1.6"/><rect x="10.5" y="10.5" width="9" height="1.6"/><rect x="7" y="14" width="2" height="1.6"/><rect x="10.5" y="14" width="8" height="1.6"/><rect x="7" y="17.5" width="2" height="1.6"/><rect x="10.5" y="17.5" width="6" height="1.6"/><rect x="7" y="21" width="2" height="1.6"/><rect x="10.5" y="21" width="6" height="1.6"/></g><line x1="24" y1="24" x2="28" y2="28" stroke="#3c3c44" stroke-width="2.2"/><circle cx="20.8" cy="20" r="5.2" fill="#dfe4f2" stroke="#3c3c44" stroke-width="1.8"/></svg>
<svg style="left:12px;top:283px" width="28" height="26" viewBox="0 0 28 26"><rect width="28" height="26" fill="#4e75ae"/><rect x="2.2" y="5.3" width="7.4" height="3.6" fill="#dde0e6"/><rect x="2.2" y="10.6" width="7.4" height="3.6" fill="#dde0e6"/><rect x="2.2" y="15.9" width="7.4" height="3.6" fill="#dde0e6"/><rect x="2.2" y="21" width="7.4" height="3.6" fill="#dde0e6"/><rect x="10.7" y="5.3" width="7.4" height="3.6" fill="#dde0e6"/><rect x="10.7" y="10.6" width="7.4" height="3.6" fill="#dde0e6"/><rect x="10.7" y="15.9" width="7.4" height="3.6" fill="#dde0e6"/><rect x="10.7" y="21" width="7.4" height="3.6" fill="#dde0e6"/><rect x="19.2" y="5.3" width="7.4" height="3.6" fill="#dde0e6"/><rect x="19.2" y="10.6" width="7.4" height="3.6" fill="#dde0e6"/><rect x="19.2" y="15.9" width="7.4" height="3.6" fill="#dde0e6"/><rect x="19.2" y="21" width="7.4" height="3.6" fill="#dde0e6"/></svg>
<svg style="left:12px;top:326px" width="28" height="28" viewBox="0 0 28 28"><rect x="4" y="0" width="19.5" height="9" fill="#ecead8"/><rect x="0" y="17" width="28" height="6" fill="#c9cbc9"/><rect x="0" y="8.5" width="28" height="8.7" fill="#525c7d"/><circle cx="23.5" cy="12.7" r="1.9" fill="#9ad150"/><rect x="3" y="17" width="1.4" height="7.6" fill="#5a6ab0"/><rect x="23.8" y="17" width="1.4" height="7.6" fill="#5a6ab0"/><rect x="4.4" y="17" width="19.4" height="10.7" fill="#ecead8"/><rect x="8" y="20" width="12" height="0.9" fill="#c9c2a5"/><rect x="8" y="23" width="12" height="0.9" fill="#c9c2a5"/></svg>
<svg style="left:12px;top:414px" width="28" height="28" viewBox="0 0 28 28"><g stroke="#5cb85c" stroke-width="4" stroke-linecap="round"><line x1="14" y1="2" x2="14" y2="26"/><line x1="2" y1="14" x2="26" y2="14"/></g></svg>
<svg style="left:11px;top:458px" width="30" height="30" viewBox="0 0 30 30"><path d="M24.5 21 A12.3 12.3 0 1 1 25.5 9" fill="none" stroke="#4aa04a" stroke-width="3.4"/><path d="M28.8 6 L28.5 13.5 L21.3 11.5 Z" fill="#4aa04a"/><g stroke="#4aa04a" stroke-width="3.2" stroke-linecap="round"><line x1="15" y1="9" x2="15" y2="21"/><line x1="9" y1="15" x2="21" y2="15"/></g></svg>
<svg style="left:11px;top:503px" width="31" height="31" viewBox="0 0 31 31"><g transform="translate(15.5 15.5) rotate(-45)"><path d="M-19 0 L-13 -3.4 L-13 3.4 Z" fill="#f4d5a0"/><path d="M-19.5 0 L-16.8 -1.5 L-16.8 1.5 Z" fill="#333"/><rect x="-13" y="-3.6" width="21" height="7.2" fill="#ef9f2f"/><rect x="-13" y="-1" width="21" height="2" fill="#f7c04a"/><rect x="8" y="-3.6" width="3" height="7.2" fill="#ebe3b4"/><path d="M11 -3.6 H13 A3.6 3.6 0 0 1 13 3.6 H11 Z" fill="#d9574a"/></g></svg>
<svg style="left:15px;top:548px" width="22" height="30" viewBox="0 0 22 30"><rect x="9" y="0.5" width="4" height="2.5" fill="#d8d4ce"/><rect x="1" y="3.4" width="19.8" height="4.8" fill="#7e7d83"/><path d="M2 8.2 H11 V29 H3 Z" fill="#c9c8cd"/><path d="M11 8.2 H20 L19 29 H11 Z" fill="#a9a8ad"/></svg>
<svg style="left:12px;top:1006px" width="28" height="28" viewBox="0 0 28 28"><g fill="#707070" transform="translate(14 14.5)"><rect x="-3" y="-13.5" width="6" height="6" rx="1" transform="rotate(0)"/><rect x="-3" y="-13.5" width="6" height="6" rx="1" transform="rotate(45)"/><rect x="-3" y="-13.5" width="6" height="6" rx="1" transform="rotate(90)"/><rect x="-3" y="-13.5" width="6" height="6" rx="1" transform="rotate(135)"/><rect x="-3" y="-13.5" width="6" height="6" rx="1" transform="rotate(180)"/><rect x="-3" y="-13.5" width="6" height="6" rx="1" transform="rotate(225)"/><rect x="-3" y="-13.5" width="6" height="6" rx="1" transform="rotate(270)"/><rect x="-3" y="-13.5" width="6" height="6" rx="1" transform="rotate(315)"/><circle r="10"/></g><circle cx="14" cy="14.5" r="4.3" fill="#d0d4dd"/></svg>
<svg style="left:12px;top:1051px" width="28" height="28" viewBox="0 0 28 28"><circle cx="14" cy="14" r="13.8" fill="#6fabdd"/><path d="M14 8 L7.4 14.4 L14 20.7 M19.8 8 L13.2 14.4 L19.8 20.7" fill="none" stroke="#f2f6fa" stroke-width="1.4"/></svg>
<svg style="left:198px;top:396px" width="30" height="22" viewBox="0 0 30 22"><rect x="1" y="3.3" width="19" height="11" rx="1" fill="#5b7690"/><rect x="1" y="14" width="19" height="3.5" fill="#5d6080"/><rect x="19.5" y="3" width="1" height="2.5" fill="#888"/><path d="M20 5 H25.5 L28.5 11 V17.5 H20 Z" fill="#f25a26"/><path d="M22.5 6.3 H25.3 L27 10.5 H22.5 Z" fill="#4b5068"/><rect x="27" y="13.5" width="1.8" height="1.6" fill="#f7d37a"/><circle cx="6" cy="18.3" r="3.3" fill="#4e4b5e"/><circle cx="6" cy="18.3" r="1.7" fill="#8e8d99"/><circle cx="23.3" cy="18.3" r="3.3" fill="#4e4b5e"/><circle cx="23.3" cy="18.3" r="1.7" fill="#8e8d99"/><rect x="10.5" y="17.5" width="6" height="1.8" fill="#8e8d99"/></svg>
<svg style="left:975px;top:821px" width="28" height="28" viewBox="0 0 28 28"><rect x="1" y="1" width="25" height="25.5" fill="#c9cff0"/><rect x="1" y="2.8" width="22.8" height="22" fill="#fdfdfb"/><rect x="1" y="2.4" width="22.8" height="1.9" fill="#2a64d0"/><rect x="1" y="6.2" width="13" height="0.8" fill="#d8d8d8"/><g fill="#666"><rect x="1.5" y="9.2" width="2.2" height="2.4"/><rect x="6.5" y="9.2" width="2.2" height="2.4"/><rect x="11.5" y="9.2" width="3.2" height="2.4"/></g><clipPath id="gc1"><rect x="1" y="2.8" width="22.8" height="21"/></clipPath><g clip-path="url(#gc1)"><circle cx="21.5" cy="19" r="7.8" fill="#5aa8e0"/><path d="M16 13 Q19 12.5 20 15 Q18.5 17 17 16.5 Q15 18 16.5 21 L15 23 Q13 19 14 15 Z" fill="#a5cf8c"/><path d="M21 15.5 Q25 15 25 19 Q24 24 21 24.5 Q20 21 22 19 Q20 17 21 15.5 Z" fill="#c9d48e"/><path d="M23 20 Q25 21 24.5 24 L22 24 Z" fill="#d6b47a"/></g><rect x="23.8" y="1" width="2.2" height="25.5" fill="#c9cff0"/><rect x="1" y="23.8" width="22.8" height="2" fill="#9a90b8"/></svg>
<svg style="left:1195px;top:855px" width="30" height="30" viewBox="0 0 30 30"><rect x="1" y="8" width="21.8" height="19" fill="#fdfdfb" stroke="#d0d6f0" stroke-width="0.8"/><rect x="1" y="8" width="21.8" height="4" fill="#8fa4dd"/><g fill="#555"><rect x="3" y="14.5" width="6" height="2"/><rect x="11" y="14.5" width="2.5" height="2"/><rect x="14.5" y="14.5" width="2.5" height="2"/></g><clipPath id="gc2"><rect x="1" y="8" width="21.8" height="19"/></clipPath><g clip-path="url(#gc2)"><circle cx="21" cy="21.5" r="6.5" fill="#6db6e8"/><path d="M18.5 16.5 Q21.5 17.5 21.5 20.5 Q24.5 21.5 23 25.5 L20 26 Q18.5 22.5 16.5 23.5 Q16 18.5 18.5 16.5 Z" fill="#b9d98e"/></g><rect x="1" y="25.5" width="21.8" height="1.6" fill="#8a84b0"/><path d="M20.5 1.5 L22.2 6.3 L27.2 6.3 L23.2 9.3 L24.7 14.2 L20.5 11.2 L16.3 14.2 L17.8 9.3 L13.8 6.3 L18.8 6.3 Z" fill="#f6d84a" stroke="#f2e6b0" stroke-width="0.6"/></svg>
<svg style="left:649px;top:964px" width="32" height="26" viewBox="0 0 32 26"><path d="M2.4 12.5 L12 2.2 H24 L16.2 17.5 Z" fill="#f5dea0"/><path d="M2.4 12.5 L16.2 17.5 L16 19.3 L2.6 14.3 Z" fill="#ecd2b8"/><path d="M3.5 14.8 L16 19.3 L22 12.5" fill="none" stroke="#d5a08c" stroke-width="1.1"/><path d="M23.5 5.5 L26.5 4.5 L25 9 Z" fill="#e6c270"/><line x1="22.5" y1="11.5" x2="27.5" y2="15.5" stroke="#e8c87a" stroke-width="2.4"/><line x1="26.5" y1="14.8" x2="28" y2="16" stroke="#9ab0c8" stroke-width="2"/><circle cx="17.9" cy="7.9" r="4.6" fill="#f3ebe6" stroke="#b0cde6" stroke-width="1.5"/></svg>
</div></body></html>
